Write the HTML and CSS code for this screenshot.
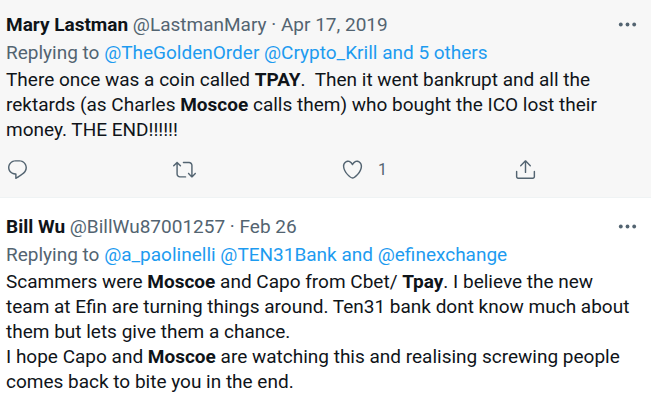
FILE: index.html
```html
<!DOCTYPE html>
<html lang="en">
<head>
<meta charset="utf-8">
<title>Replies</title>
<meta name="viewport" content="width=device-width, initial-scale=1">
<link rel="stylesheet" href="styles.css">
</head>
<body>
<main class="timeline">
  <article class="tweet tweet-active">
    <header class="tweet-header">
      <div class="byline"><a class="name" href="#">Mary Lastman</a> <a class="meta" href="#">@LastmanMary</a> <span class="meta">·</span> <a class="meta" href="#"><time datetime="2019-04-17">Apr 17, 2019</time></a></div>
      <button class="more" type="button" aria-label="More"><svg class="icon" viewBox="0 0 24 24" aria-hidden="true"><circle cx="5" cy="12" r="2"/><circle cx="12" cy="12" r="2"/><circle cx="19" cy="12" r="2"/></svg></button>
    </header>
    <p class="replying">Replying to <a href="#">@TheGoldenOrder</a> <a href="#">@Crypto_Krill</a> <a href="#">and 5 others</a></p>
    <p class="text">There once was a coin called <b>TPAY</b>.&nbsp; Then it went bankrupt and all the<br>rektards (as Charles <b>Moscoe</b> calls them) who bought the ICO lost their<br>money. THE END!!!!!!</p>
    <div class="actions">
      <button class="action" type="button" aria-label="Reply"><svg class="icon" viewBox="0 0 24 24" aria-hidden="true"><path d="M14.046 2.242l-4.148-.01h-.002c-4.374 0-7.8 3.427-7.8 7.802 0 4.098 3.186 7.206 7.465 7.37v3.828c0 .108.044.286.12.403.142.225.384.347.632.347.138 0 .277-.038.402-.118.264-.168 6.473-4.14 8.088-5.506 1.902-1.61 3.04-3.97 3.043-6.312v-.017c-.006-4.367-3.43-7.787-7.8-7.788zm3.787 12.972c-1.134.96-4.862 3.405-6.772 4.643V16.67c0-.414-.335-.75-.75-.75h-.396c-3.66 0-6.318-2.476-6.318-5.886 0-3.534 2.768-6.302 6.3-6.302l4.147.01h.002c3.532 0 6.3 2.766 6.302 6.296-.003 1.91-.942 3.844-2.514 5.176z"/></svg></button>
      <button class="action" type="button" aria-label="Retweet"><svg class="icon" viewBox="0 0 24 24" aria-hidden="true"><path d="M23.77 15.67c-.292-.293-.767-.293-1.06 0l-2.22 2.22V7.65c0-2.068-1.683-3.75-3.75-3.75h-5.85c-.414 0-.75.336-.75.75s.336.75.75.75h5.85c1.24 0 2.25 1.01 2.25 2.25v10.24l-2.22-2.22c-.293-.293-.768-.293-1.06 0s-.294.768 0 1.06l3.5 3.5c.145.147.337.22.53.22s.383-.072.53-.22l3.5-3.5c.294-.292.294-.767 0-1.06zm-10.66 3.28H7.26c-1.24 0-2.25-1.01-2.25-2.25V6.46l2.22 2.22c.148.147.34.22.532.22s.384-.073.53-.22c.293-.293.293-.768 0-1.06l-3.5-3.5c-.293-.294-.768-.294-1.06 0l-3.5 3.5c-.294.292-.294.767 0 1.06s.767.293 1.06 0l2.22-2.22V16.7c0 2.068 1.683 3.75 3.75 3.75h5.85c.414 0 .75-.336.75-.75s-.337-.75-.75-.75z"/></svg></button>
      <button class="action" type="button" aria-label="Like, 1 like"><svg class="icon" viewBox="0 0 24 24" aria-hidden="true"><path d="M12 21.638h-.014C9.403 21.59 1.95 14.856 1.95 8.478c0-3.064 2.525-5.754 5.403-5.754 2.29 0 3.83 1.58 4.646 2.73.814-1.148 2.354-2.73 4.645-2.73 2.88 0 5.404 2.69 5.404 5.755 0 6.376-7.454 13.11-10.037 13.157H12zM7.354 4.225c-2.08 0-3.903 1.988-3.903 4.255 0 5.74 7.034 11.596 8.55 11.658 1.518-.062 8.55-5.917 8.55-11.658 0-2.267-1.823-4.255-3.903-4.255-2.528 0-3.94 2.936-3.952 2.965-.23.562-1.156.562-1.387 0-.014-.03-1.425-2.965-3.954-2.965z"/></svg><span>1</span></button>
      <button class="action" type="button" aria-label="Share"><svg class="icon" viewBox="0 0 24 24" aria-hidden="true"><path d="M17.53 7.47l-5-5c-.293-.293-.768-.293-1.06 0l-5 5c-.294.293-.294.768 0 1.06s.767.294 1.06 0l3.72-3.72V15c0 .414.336.75.75.75s.75-.336.75-.75V4.81l3.72 3.72c.146.147.338.22.53.22s.384-.072.53-.22c.293-.293.293-.767 0-1.06z"/><path d="M19.708 21.944H4.292C3.028 21.944 2 20.916 2 19.652V14c0-.414.336-.75.75-.75s.75.336.75.75v5.652c0 .437.355.792.792.792h15.416c.437 0 .792-.355.792-.792V14c0-.414.336-.75.75-.75s.75.336.75.75v5.652c0 1.264-1.028 2.292-2.292 2.292z"/></svg></button>
    </div>
  </article>
  <article class="tweet">
    <header class="tweet-header">
      <div class="byline"><a class="name" href="#">Bill Wu</a> <a class="meta" href="#">@BillWu87001257</a> <span class="meta">·</span> <a class="meta" href="#"><time>Feb 26</time></a></div>
      <button class="more" type="button" aria-label="More"><svg class="icon" viewBox="0 0 24 24" aria-hidden="true"><circle cx="5" cy="12" r="2"/><circle cx="12" cy="12" r="2"/><circle cx="19" cy="12" r="2"/></svg></button>
    </header>
    <p class="replying">Replying to <a href="#">@a_paolinelli</a> <a href="#">@TEN31Bank</a> <a href="#">and @efinexchange</a></p>
    <p class="text">Scammers were <b>Moscoe</b> and Capo from Cbet/ <b>Tpay</b>. I believe the new<br>team at Efin are turning things around. Ten31 bank dont know much about<br>them but lets give them a chance.<br>I hope Capo and <b>Moscoe</b> are watching this and realising screwing people<br>comes back to bite you in the end.</p>
  </article>
</main>
</body>
</html>
```
FILE: styles.css
```css
* {
  box-sizing: border-box;
}

body {
  margin: 0;
  background: #fff;
  color: #0f1419;
  font-family: Roboto, "Liberation Sans", sans-serif;
  font-size: 19px;
  line-height: 25px;
}

a {
  color: #1d9bf0;
  text-decoration: none;
}

button {
  border: 0;
  padding: 0;
  background: none;
  color: #536471;
  font: inherit;
  cursor: pointer;
}

p {
  margin: 0;
}

.tweet {
  padding: 16px 12px 4px 6px;
}

.tweet-active {
  padding-top: 12px;
  padding-bottom: 16px;
  border-bottom: 1px solid #eff3f4;
  background: #f7f7f7;
}

.tweet-header {
  display: flex;
  justify-content: space-between;
  align-items: center;
}

.name {
  color: #0f1419;
  font-weight: 700;
}

.meta {
  color: #536471;
}

.icon {
  display: block;
  width: 23px;
  height: 23px;
  fill: currentColor;
}

.replying {
  margin: 3px 0 2px;
  color: #536471;
}

.actions {
  display: grid;
  grid-template-columns: 4fr 4fr 4fr 3fr;
  grid-template-columns: 167fr 168fr 173fr 125fr;
  margin-top: 16px;
}

.action {
  display: flex;
  align-items: center;
  gap: 14px;
  font-size: 16px;
  line-height: 23px;
}
```
